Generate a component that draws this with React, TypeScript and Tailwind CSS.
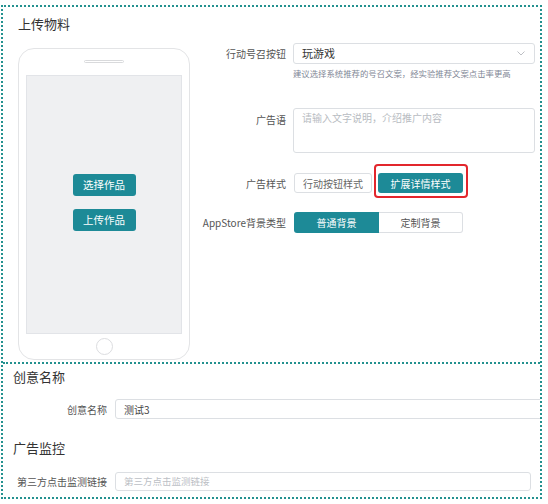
import React from "react";

const font = { fontFamily: '"Noto Sans CJK SC", "Noto Sans", sans-serif' };

function Phone() {
  return (
    <div className="mt-[5px] ml-[15px] w-[172px] h-[312px] shrink-0 border border-[#e3e4e6] rounded-[16px] flex flex-col items-center">
      <div className="mt-[11px] w-[40px] h-[3px] rounded-full border border-[#d9dadc]" />
      <div className="mt-[12px] w-[156px] h-[259px] bg-[#eff0f2] border border-[#e2e4e8] flex flex-col items-center pt-[98px] gap-[13px]">
        <button className="w-[63px] h-[22px] bg-[#1d8a97] text-white text-[10.5px] rounded-[3px] leading-none">选择作品</button>
        <button className="w-[63px] h-[22px] bg-[#1d8a97] text-white text-[10.5px] rounded-[3px] leading-none">上传作品</button>
      </div>
      <div className="mt-[4px] w-[17px] h-[17px] rounded-full border border-[#dcdde0]" />
    </div>
  );
}

function Form() {
  return (
    <div className="flex flex-col">
      <div className="flex items-center h-[21px] gap-[7px]">
        <div className="w-[96px] shrink-0 text-right text-[10px] text-[#555]">行动号召按钮</div>
        <div className="w-[242px] h-[21px] border border-[#dcdfe3] rounded-[3px] flex items-center pl-[8px] pr-[8px] justify-between">
          <span className="text-[11px] text-[#333]">玩游戏</span>
          <svg width="8" height="5" viewBox="0 0 8 5" className="mr-[1px]">
            <path d="M0.5 0.5 L4 4 L7.5 0.5" fill="none" stroke="#b5b8bd" strokeWidth="0.9" />
          </svg>
        </div>
      </div>
      <div className="mt-[3px] ml-[103px] text-[8.4px] leading-[12px] text-[#7f8796] whitespace-nowrap">
        建议选择系统推荐的号召文案，经实验推荐文案点击率更高
      </div>
      <div className="mt-[29px] flex items-start gap-[7px]">
        <div className="w-[96px] shrink-0 text-right text-[10px] leading-[12px] mt-[6px] text-[#555]">广告语</div>
        <div className="w-[242px] h-[45px] border border-[#dcdfe3] rounded-[3px] pl-[8px] pt-[2px] text-[10px] leading-[14px] text-[#b8bcc2]">
          请输入文字说明，介绍推广内容
        </div>
      </div>
      <div className="mt-[20px] flex items-center h-[20px] gap-[7px]">
        <div className="w-[96px] shrink-0 text-right text-[10px] text-[#555]">广告样式</div>
        <div className="flex items-center">
          <div className="ml-[1px] w-[78px] h-[20px] border border-[#dcdfe3] rounded-[3px] flex items-center justify-center text-[10px] text-[#666]">
            行动按钮样式
          </div>
          <div className="relative ml-[6px] w-[85px] h-[20px] bg-[#1d8a97] rounded-[3px] flex items-center justify-center text-[10px] text-white">
            扩展详情样式
            <div className="absolute -top-[9px] -left-[4px] -right-[5px] -bottom-[5px] border-2 border-[#e2262c] rounded-[4px]" />
          </div>
        </div>
      </div>
      <div className="mt-[19px] flex items-center h-[21px] gap-[7px]">
        <div className="w-[96px] shrink-0 text-right text-[10px] text-[#555] whitespace-nowrap">AppStore背景类型</div>
        <div className="ml-[1px] flex h-[21px]">
          <div className="w-[85px] h-[21px] bg-[#1d8a97] rounded-l-[3px] flex items-center justify-center text-[10px] text-white">
            普通背景
          </div>
          <div className="w-[84px] h-[21px] border border-l-0 border-[#dcdfe3] rounded-r-[3px] flex items-center justify-center text-[10px] text-[#555]">
            定制背景
          </div>
        </div>
      </div>
    </div>
  );
}

export default function App() {
  return (
    <div className="w-[548px] h-[504px] bg-white overflow-hidden pt-[5px]" style={font}>
      <div className="ml-[1px] w-[541px] border-2 border-dotted border-[#23918f]">
        <div className="h-[355px] flex flex-col">
          <div className="h-[36px] pl-[15px] pt-[8px] text-[13px] leading-[18px] text-[#333]">上传物料</div>
          <div className="flex items-start">
            <Phone />
            <Form />
          </div>
        </div>
        <div className="border-t-2 border-dotted border-[#23918f] h-[135px] overflow-hidden">
          <div className="pl-[10px] pt-[4px] text-[13px] leading-[18px] text-[#333]">创意名称</div>
          <div className="mt-[13px] flex items-center h-[20px] gap-[8px]">
            <div className="w-[104px] shrink-0 text-right text-[10px] text-[#555]">创意名称</div>
            <div className="w-[440px] shrink-0 h-[20px] border border-[#dcdfe3] rounded-[3px] flex items-center pl-[8px] text-[10px] text-[#444]">
              测试3
            </div>
          </div>
          <div className="mt-[20px] pl-[10px] text-[13px] leading-[18px] text-[#333]">广告监控</div>
          <div className="mt-[15px] flex items-center h-[19px] gap-[8px]">
            <div className="w-[104px] shrink-0 text-right text-[10px] text-[#555] whitespace-nowrap">第三方点击监测链接</div>
            <div className="w-[416px] shrink-0 h-[19px] border border-[#dcdfe3] rounded-[3px] flex items-center pl-[8px] text-[9.5px] text-[#bcc0c5]">
              第三方点击监测链接
            </div>
          </div>
        </div>
      </div>
    </div>
  );
}
